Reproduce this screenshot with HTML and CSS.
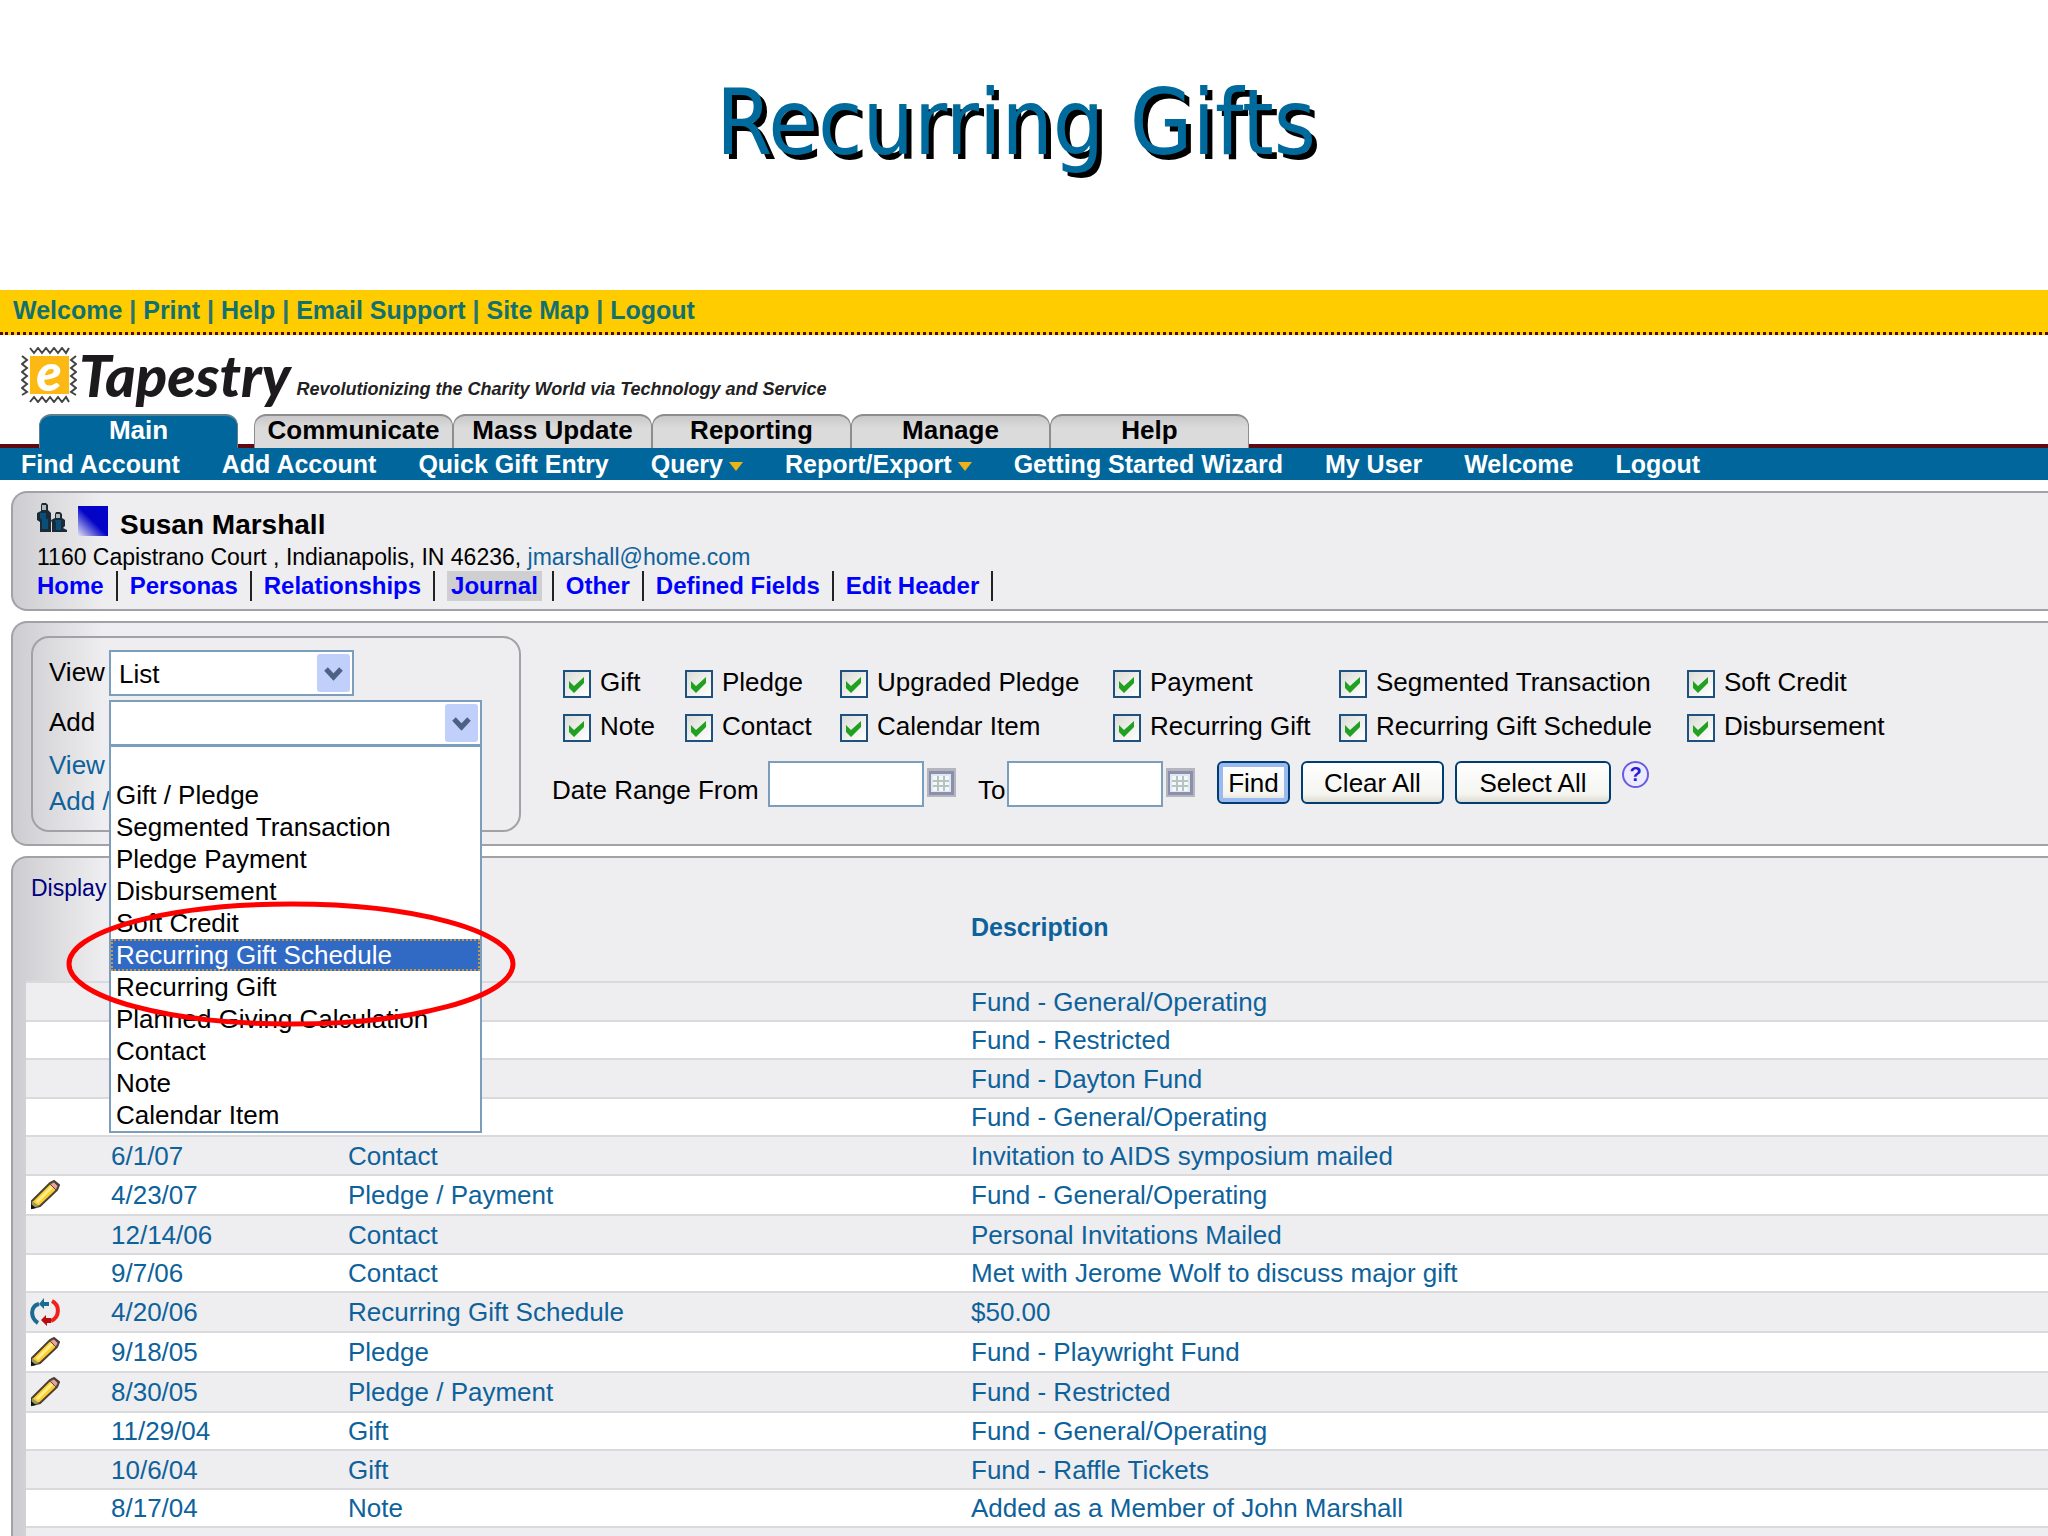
FILE: index.html
```html
<!DOCTYPE html>
<html lang="en">
<head>
<meta charset="utf-8">
<title>Recurring Gifts</title>
<link rel="stylesheet" href="styles.css">
</head>
<body>
<svg class="defs" width="0" height="0" aria-hidden="true">
  <symbol id="pencil" viewBox="0 0 30 30">
    <path d="M2 28V21L20 3L24 1L29 5L27 10L10 26Z" fill="#fc3" stroke="#4a4032" stroke-width="2"/>
    <path d="M7 22L22 7" stroke="#fff08a" stroke-width="3"/>
    <path d="M20 4L24 2L28 6L26 10Z" fill="#e9a0a0" stroke="#55483c"/>
    <path d="M2 28V21L9 26Z" fill="#9a9c5c"/><path d="M1 29V24L6 28Z" fill="#111"/>
  </symbol>
  <symbol id="calendar" viewBox="0 0 29 29">
    <path d="M0 0H29V29H0Z" fill="#b4b6be"/><path d="M2 3H27V27H2Z" fill="#8d8dae"/>
    <path d="M4 6H24V24H4Z" fill="#dce9f1"/>
    <path d="M6 8H22V23H6Z" fill="#f3f8f3"/><path d="M6 13H22M6 18H22M11 8V23M17 8V23" stroke="#b5c2c6" stroke-width="2"/>
  </symbol>
</svg>
<h1 class="title">Recurring Gifts</h1>

<nav class="topbar" aria-label="Utility">
  <a href="#">Welcome</a> | <a href="#">Print</a> | <a href="#">Help</a> | <a href="#">Email Support</a> | <a href="#">Site Map</a> | <a href="#">Logout</a>
</nav>

<header class="brand">
  <div class="stamp">
    <svg viewBox="0 0 56 56" aria-hidden="true">
      <rect x="9" y="9" width="39" height="38" fill="#fdb913"/>
      <path d="M9 1L13 6L17 1L21 6L25 1L29 6L33 1L37 6L41 1L45 6L48 1M9 55L13 50L17 55L21 50L25 55L29 50L33 55L37 50L41 55L45 50L48 55M1 9L6 13L1 17L6 21L1 25L6 29L1 33L6 37L1 41L6 45L1 48M55 9L50 13L55 17L50 21L55 25L50 29L55 33L50 37L55 41L50 45L55 48" fill="none" stroke="#444" stroke-width="2"/>
    </svg>
    <span>e</span>
  </div>
  <span class="wordmark">Tapestry</span>
  <span class="tagline">Revolutionizing the Charity World via Technology and Service</span>
</header>

<nav class="tabs" aria-label="Sections">
  <a class="tab active" href="#">Main</a>
  <a class="tab" href="#">Communicate</a>
  <a class="tab" href="#">Mass Update</a>
  <a class="tab" href="#">Reporting</a>
  <a class="tab" href="#">Manage</a>
  <a class="tab" href="#">Help</a>
</nav>
<nav class="subnav" aria-label="Main">
  <a href="#">Find Account</a>
  <a href="#">Add Account</a>
  <a href="#">Quick Gift Entry</a>
  <a class="more" href="#">Query</a>
  <a class="more" href="#">Report/Export</a>
  <a href="#">Getting Started Wizard</a>
  <a href="#">My User</a>
  <a href="#">Welcome</a>
  <a href="#">Logout</a>
</nav>

<main class="content">
  <section class="panel account">
    <div class="person">
      <svg width="30" height="30" viewBox="0 0 30 30" aria-hidden="true">
        <path d="M5 0H9L11 2V7L14 10V29H3V19L0 17V10L4 8V2Z" fill="#1b2b36"/>
        <path d="M5 2H9V7H5Z" fill="#b9b9b4"/><path d="M3 10H9V16H11V26H5V17L3 15Z" fill="#0a4f7c"/>
        <path d="M19 9H23L25 11V15L28 17V23L26 25L30 27V29H15V20L14 17L18 15V11Z" fill="#1b2b36"/>
        <path d="M19 11H23V15H19Z" fill="#b9b9b4"/><path d="M18 17H24V27H19V20Z" fill="#0a4f7c"/>
      </svg>
      <span class="swatch"></span>
      <h2>Susan Marshall</h2>
    </div>
    <p class="address">1160 Capistrano Court , Indianapolis, IN 46236, <a href="#">jmarshall@home.com</a></p>
    <nav class="links" aria-label="Account">
      <a href="#">Home</a><a href="#">Personas</a><a href="#">Relationships</a><a class="current" href="#"><span>Journal</span></a><a href="#">Other</a><a href="#">Defined Fields</a><a href="#">Edit Header</a>
    </nav>
  </section>

  <section class="panel filters">
    <div class="chooser">
      <div class="field">
        <label for="view">View</label>
        <select id="view" class="view"><option>List</option></select>
      </div>
      <div class="field">
        <label for="add">Add</label>
        <div class="combo">
          <select id="add"><option></option></select>
          <ul class="menu">
            <li></li>
            <li>Gift / Pledge</li>
            <li>Segmented Transaction</li>
            <li>Pledge Payment</li>
            <li>Disbursement</li>
            <li>Soft Credit</li>
            <li class="selected">Recurring Gift Schedule</li>
            <li>Recurring Gift</li>
            <li>Planned Giving Calculation</li>
            <li>Contact</li>
            <li>Note</li>
            <li>Calendar Item</li>
          </ul>
          <svg class="ring" viewBox="0 0 452 128" aria-hidden="true"><ellipse cx="226" cy="64" rx="222" ry="60" fill="none" stroke="#f00" stroke-width="5"/></svg>
        </div>
      </div>
      <a class="side" href="#">View</a>
      <a class="side" href="#">Add /</a>
    </div>
    <form class="criteria">
      <div class="checks">
        <label><input type="checkbox" checked>Gift</label>
        <label><input type="checkbox" checked>Pledge</label>
        <label><input type="checkbox" checked>Upgraded Pledge</label>
        <label><input type="checkbox" checked>Payment</label>
        <label><input type="checkbox" checked>Segmented Transaction</label>
        <label><input type="checkbox" checked>Soft Credit</label>
        <label><input type="checkbox" checked>Note</label>
        <label><input type="checkbox" checked>Contact</label>
        <label><input type="checkbox" checked>Calendar Item</label>
        <label><input type="checkbox" checked>Recurring Gift</label>
        <label><input type="checkbox" checked>Recurring Gift Schedule</label>
        <label><input type="checkbox" checked>Disbursement</label>
      </div>
      <div class="range">
        <label class="from" for="from">Date Range From</label>
        <input id="from" type="text">
        <svg class="cal" aria-hidden="true"><use href="#calendar"/></svg>
        <label class="to" for="to">To</label>
        <input id="to" type="text">
        <svg class="cal" aria-hidden="true"><use href="#calendar"/></svg>
        <div class="actions">
          <button class="primary" type="button">Find</button>
          <button class="clear" type="button">Clear All</button>
          <button class="all" type="button">Select All</button>
          <a class="help" href="#">?</a>
        </div>
      </div>
    </form>
  </section>

  <section class="panel journal">
    <p class="display">Display</p>
    <table>
      <thead><tr><th class="icon"></th><th class="date"></th><th class="type"></th><th>Description</th></tr></thead>
      <tbody>
        <tr><td></td><td></td><td></td><td><a href="#">Fund - General/Operating</a></td></tr>
        <tr><td></td><td></td><td></td><td><a href="#">Fund - Restricted</a></td></tr>
        <tr><td></td><td></td><td></td><td><a href="#">Fund - Dayton Fund</a></td></tr>
        <tr><td></td><td></td><td></td><td><a href="#">Fund - General/Operating</a></td></tr>
        <tr><td></td><td>6/1/07</td><td>Contact</td><td><a href="#">Invitation to AIDS symposium mailed</a></td></tr>
        <tr class="tall"><td><svg class="mark"><use href="#pencil"/></svg></td><td>4/23/07</td><td>Pledge / Payment</td><td><a href="#">Fund - General/Operating</a></td></tr>
        <tr><td></td><td>12/14/06</td><td>Contact</td><td><a href="#">Personal Invitations Mailed</a></td></tr>
        <tr><td></td><td>9/7/06</td><td>Contact</td><td><a href="#">Met with Jerome Wolf to discuss major gift</a></td></tr>
        <tr class="tall"><td><svg class="mark" viewBox="0 0 30 30"><path d="M8 26C0 21 0 9 9 7" fill="none" stroke="#1b6a92" stroke-width="4"/><path d="M9 7L14 1V5H19V9H14V12Z" fill="#1b6a92"/><path d="M22 4C30 8 30 20 21 24" fill="none" stroke="#f0201c" stroke-width="4"/><path d="M11 23L16 18V21H21V26H17V29Z" fill="#b80c0c"/></svg></td><td>4/20/06</td><td>Recurring Gift Schedule</td><td><a href="#">$50.00</a></td></tr>
        <tr class="tall"><td><svg class="mark"><use href="#pencil"/></svg></td><td>9/18/05</td><td>Pledge</td><td><a href="#">Fund - Playwright Fund</a></td></tr>
        <tr class="tall"><td><svg class="mark"><use href="#pencil"/></svg></td><td>8/30/05</td><td>Pledge / Payment</td><td><a href="#">Fund - Restricted</a></td></tr>
        <tr><td></td><td>11/29/04</td><td>Gift</td><td><a href="#">Fund - General/Operating</a></td></tr>
        <tr><td></td><td>10/6/04</td><td>Gift</td><td><a href="#">Fund - Raffle Tickets</a></td></tr>
        <tr><td></td><td>8/17/04</td><td>Note</td><td><a href="#">Added as a Member of John Marshall</a></td></tr>
        <tr><td></td><td></td><td></td><td></td></tr>
      </tbody>
    </table>
  </section>
</main>
</body>
</html>
```
FILE: styles.css
```css
* { box-sizing: border-box; }
body {
  margin: 0;
  height: 100vh;
  overflow: hidden;
  display: flex;
  flex-direction: column;
  background: #fff;
  color: #000;
  font: 26px/32px "Liberation Sans", Arial, sans-serif;
}
a { color: #0e629b; text-decoration: none; }
.defs { position: absolute; }

.title {
  margin: 0;
  height: 290px;
  padding: 71px 16px 0 0;
  text-align: center;
  font: 90px/104px "DejaVu Sans Condensed", "Noto Sans", sans-serif;
  color: #006a9c;
  text-shadow: 5px 5px 0 #000;
}

.topbar {
  height: 45px;
  padding: 4px 13px;
  background: #fc0;
  border-bottom: 3px dotted #5a0a0a;
  font-size: 25px;
  font-weight: bold;
  color: #2a7470;
}
.topbar a { color: #12706f; }

.brand { display: flex; height: 79px; padding: 12px 21px 0; }
.stamp { display: grid; width: 56px; height: 56px; }
.stamp > * { grid-area: 1 / 1; }
.stamp span {
  color: #fff;
  text-align: center;
  font: italic 900 52px/48px Lato, sans-serif;
}
.wordmark { margin-left: 2px; font: italic 900 58px/56px Lato, sans-serif; color: #1c1a1c; }
.tagline { margin: 30px 0 0 6px; font: italic bold 18px/24px "Liberation Sans", Arial, sans-serif; color: #222; }

.tabs {
  display: flex;
  height: 34px;
  padding-left: 39px;
  background: linear-gradient(#5f0a10, #5f0a10) bottom / 100% 4px no-repeat;
}
.tab {
  width: 199px;
  border: 2px solid #8d8d90;
  border-width: 2px 1px 0;
  border-radius: 12px 12px 0 0;
  background: linear-gradient(#c9c8ca, #dcdbdc 12px);
  color: #000;
  font-weight: bold;
  line-height: 28px;
  text-align: center;
}
.tab.active { margin-right: 16px; background: #00669b; color: #fff; border-color: #5d7f92; }

.subnav {
  display: flex;
  gap: 42px;
  height: 32px;
  padding-left: 21px;
  background: #00669b;
  font-size: 25px;
  font-weight: bold;
}
.subnav a { color: #fff; }
.more::after {
  content: "";
  display: inline-block;
  margin-left: 6px;
  border: 7px solid transparent;
  border-top: 9px solid #ecb417;
  border-bottom: 0;
  vertical-align: 2px;
}

.content { flex: 1; display: flex; flex-direction: column; gap: 10px; min-height: 0; padding: 11px 0 0 11px; }
.panel {
  border: 2px solid #a2a1a5;
  border-right: 0;
  border-radius: 16px 0 0 16px;
  background: linear-gradient(90deg, #cdccd0, #eeedef 90px);
}

.account { height: 120px; padding: 10px 24px; }
.person { display: flex; height: 40px; }
.swatch { width: 30px; height: 30px; margin: 3px 12px 0 11px; background: linear-gradient(45deg, #e4e4f4, #0404c8 50%); }
h2 { margin: 6px 0 0; font-size: 28px; line-height: 32px; }
.address { margin: 0; font-size: 23px; line-height: 28px; }
.links { display: flex; font-size: 24px; font-weight: bold; line-height: 30px; }
.links a { padding-right: 12px; margin-right: 12px; border-right: 2px solid #222; color: #00f; }
.links .current { padding-right: 10px; }
.links span { display: block; padding: 0 4px; background: #cfced0; }

.filters { display: flex; height: 225px; padding: 13px 18px; }
.chooser { width: 490px; height: 196px; padding: 12px 16px; border: 2px solid #a2a1a5; border-radius: 18px; }
.field { display: flex; height: 47px; line-height: 45px; }
.field + .field { margin-top: 3px; }
.field label { width: 60px; }
select, input { font: inherit; border: 2px solid #7b9ebd; background-color: #fff; margin: 0; border-radius: 0; }
select {
  appearance: none;
  width: 373px; height: 46px;
  padding: 0 8px;
  background: #fff url("data:image/svg+xml,%3Csvg xmlns='http://www.w3.org/2000/svg' width='33' height='38' viewBox='0 0 33 38'%3E%3Crect width='33' height='38' rx='3' fill='%23c0d0fa'/%3E%3Cpath d='M9 15L16.500 23L24 15' fill='none' stroke='%234d6185' stroke-width='5'/%3E%3C/svg%3E") right 2px center no-repeat;
}
.view { width: 245px; }
.combo { position: relative; height: 46px; }
.menu {
  position: absolute; z-index: 1; top: 45px; left: 0;
  width: 373px; margin: 0; padding: 0;
  border: 2px solid #7b9ebd;
  background: #fff;
  list-style: none;
  line-height: 32px;
}
.menu li { height: 32px; padding-left: 5px; }
.menu .selected { background: #316ac5; color: #fff; outline: 2px dotted #c39a4a; outline-offset: -2px; }
.ring { position: absolute; z-index: 2; left: -44px; top: 200px; width: 452px; height: 128px; }
.side { display: block; line-height: 36px; }

.criteria { margin-left: 31px; padding-top: 28px; }
.checks {
  display: grid;
  grid-template-columns: 122px 155px 273px 226px 348px auto;
  grid-auto-rows: 44px;
  margin-left: 11px;
}
.checks label { display: flex; gap: 9px; line-height: 36px; }
.checks input {
  appearance: none;
  width: 28px; height: 28px;
  margin-top: 6px;
  border: 2px solid #1c5180;
  background: url("data:image/svg+xml,%3Csvg xmlns='http://www.w3.org/2000/svg' width='24' height='24' viewBox='0 0 24 24'%3E%3Cpath d='M4 9L9 14L19 5V11L9 21L4 16Z' fill='%2321a121'/%3E%3C/svg%3E") center no-repeat, linear-gradient(135deg, #dcdcd7, #fff);
}
.range { display: flex; margin-top: 9px; line-height: 58px; }
.from { width: 216px; }
.range input { width: 156px; height: 46px; }
.cal { width: 29px; height: 29px; margin: 7px 22px 0 3px; }
.to { width: 29px; }
.actions { display: flex; gap: 11px; }
button {
  height: 43px;
  padding: 0;
  border: 2px solid #003c74;
  border-radius: 6px;
  background: linear-gradient(#fff, #f4f4f0 80%, #dedbd0);
  font: inherit;
  line-height: 36px;
}
.primary { width: 73px; box-shadow: inset 0 0 0 4px #9ab9ef; }
.clear { width: 143px; }
.all { width: 156px; }
.help { width: 27px; height: 27px; border: 2px solid #6a5ce0; border-radius: 50%; background: #eceaff; color: #2a1ad0; font-weight: bold; font-size: 20px; line-height: 23px; text-align: center; }

.journal { flex: 1; min-height: 0; overflow: hidden; padding-left: 13px; border-bottom: 0; border-bottom-left-radius: 0; }
.display { margin: 0; padding: 14px 5px 0; font-size: 23px; line-height: 32px; color: #00007c; }
table { width: 100%; border-collapse: collapse; table-layout: fixed; color: #0e629b; }
th { height: 78px; padding: 0 0 32px; border-bottom: 2px solid #dad9dc; font-size: 25px; text-align: left; }
.icon { width: 85px; }
.date { width: 237px; }
.type { width: 623px; }
tbody tr { height: 38px; background: #fff; border-bottom: 2px solid #dad9dc; }
tbody tr:nth-child(odd) { height: 39px; background: #eeedef; }
tbody tr.tall { height: 40px; }
td { padding: 0; line-height: 32px; }
.mark { display: block; width: 30px; height: 30px; margin-left: 4px; }
```
